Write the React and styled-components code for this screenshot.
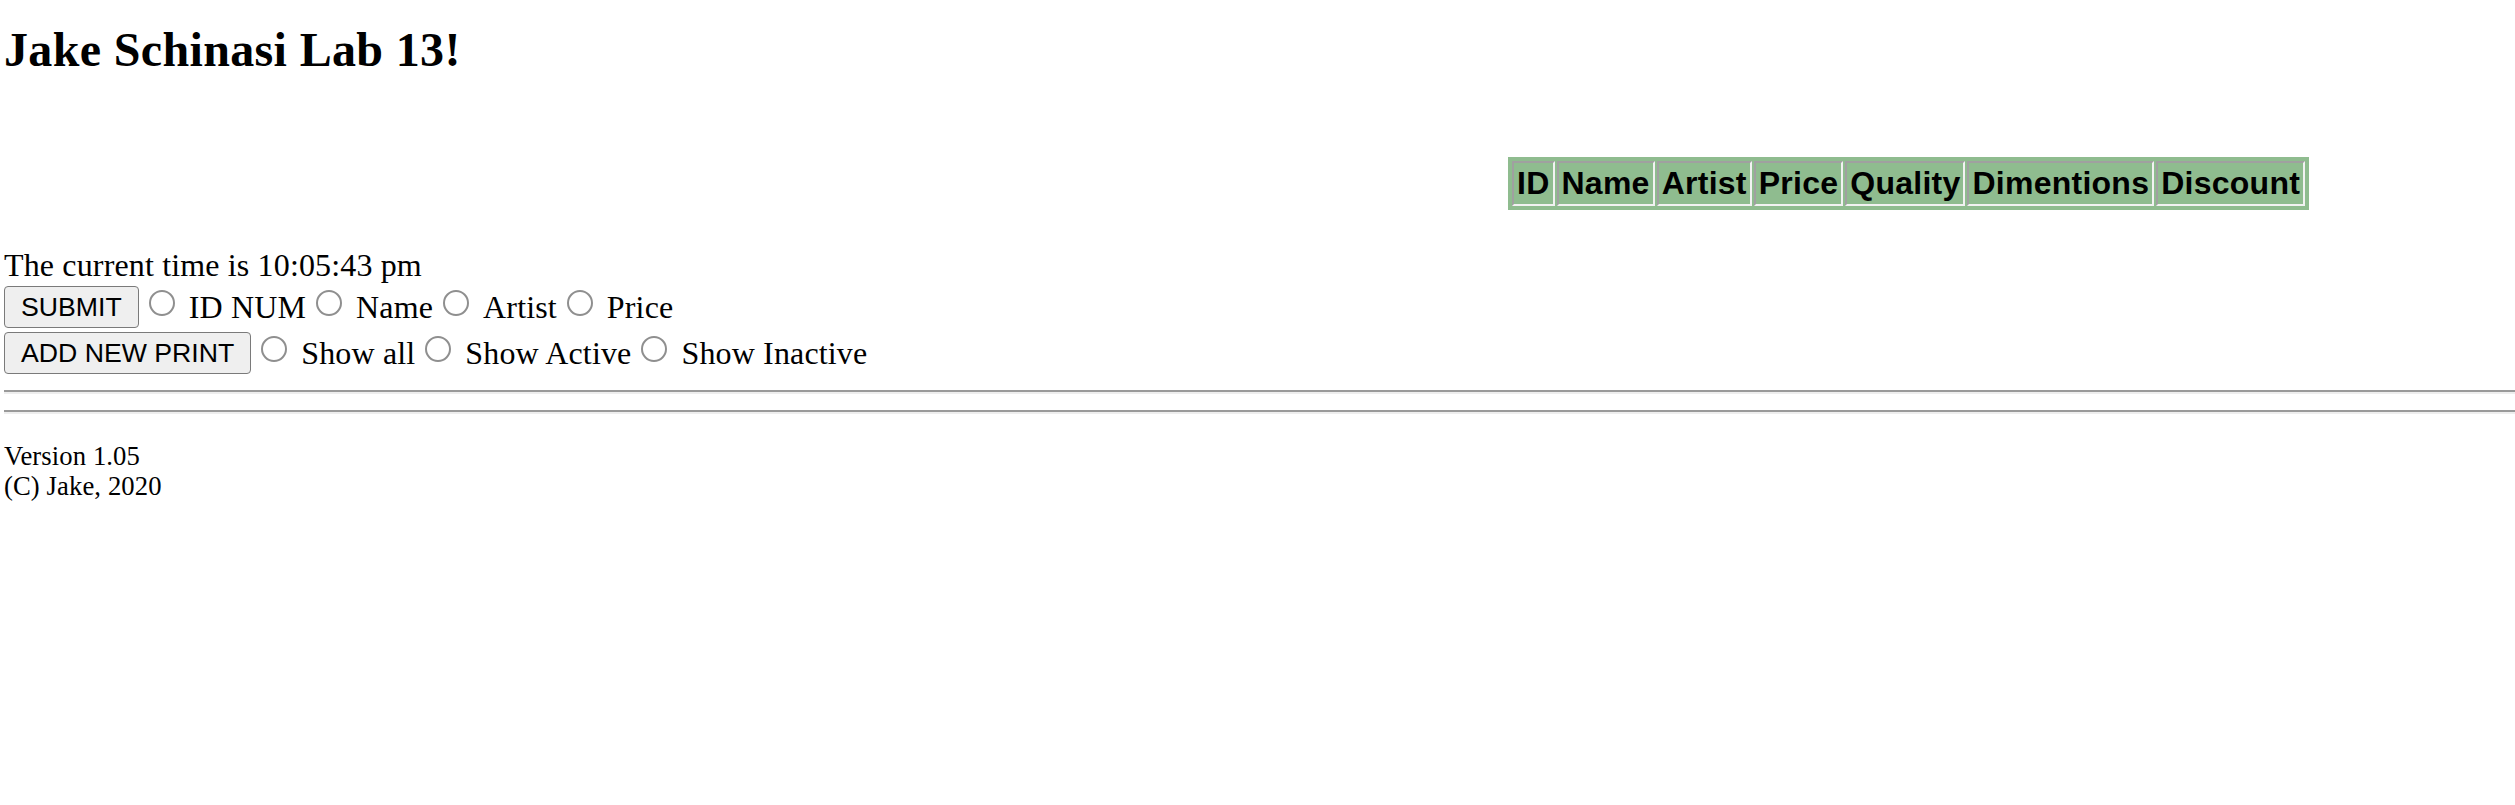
import React from "react";
import styled, { createGlobalStyle } from "styled-components";

const GlobalStyle = createGlobalStyle`
  html, body {
    margin: 0;
    padding: 0;
    background: #ffffff;
  }
  body {
    padding-left: 4px;
    font-family: "Liberation Serif", "Times New Roman", serif;
    font-size: 32px;
    color: #000000;
  }
`;

const Page = styled.div`
  display: flex;
  flex-direction: column;
  align-items: stretch;
  padding-top: 22px;
`;

const Title = styled.h1`
  margin: 0;
  font-family: "Liberation Serif", "Times New Roman", serif;
  font-size: 48px;
  font-weight: bold;
  line-height: 56px;
  letter-spacing: 0.35px;
`;

const TableWrap = styled.div`
  margin-top: 79px;
  padding-left: 1504px;
`;

const PrintTable = styled.table`
  background: #8fbc8f;
  border: 2px solid #8fbc8f;
  border-spacing: 2px;
  border-collapse: separate;
`;

const HeadCell = styled.th`
  font-family: "Liberation Sans", Arial, sans-serif;
  font-size: 32px;
  font-weight: bold;
  line-height: 37px;
  letter-spacing: 0.25px;
  padding: 2px 3px;
  border-style: solid;
  border-width: 2px;
  border-color: #a0a0a0 #f2f2f2 #f2f2f2 #a0a0a0;
  color: #000000;
  white-space: nowrap;
`;

const Clock = styled.div`
  margin-top: 37px;
  line-height: 37px;
  letter-spacing: 0.15px;
`;

const ControlRow = styled.div`
  display: flex;
  align-items: center;
  height: 42px;
  margin-top: ${(p) => p.$gap}px;
`;

const ActionButton = styled.button`
  box-sizing: border-box;
  height: 42px;
  margin: 0;
  padding: 0 16px;
  font-family: "Liberation Sans", Arial, sans-serif;
  font-size: 26.67px;
  line-height: 30px;
  color: #000000;
  background: #efefef;
  border: 1px solid #7a7a7a;
  border-radius: 4px;
  white-space: nowrap;
  cursor: default;
`;

const Radio = styled.input.attrs({ type: "radio" })`
  appearance: none;
  -webkit-appearance: none;
  box-sizing: border-box;
  flex: none;
  width: 26px;
  height: 26px;
  margin: 0 6px 8px 10px;
  border: 2px solid #8f8f8f;
  border-radius: 50%;
  background: #ffffff;
`;

const OptionLabel = styled.span`
  padding-left: 8px;
  line-height: 37px;
  letter-spacing: 0.15px;
  white-space: nowrap;
`;

const Rule = styled.div`
  height: 0;
  border-top: 2px solid #9a9a9a;
  border-bottom: 2px solid #eeeeee;
  margin-top: ${(p) => p.$gap}px;
`;

const Footer = styled.p`
  margin: 26.67px 0;
  font-size: 26.67px;
  line-height: 30.6px;
  letter-spacing: 0.1px;
`;

const columns = ["ID", "Name", "Artist", "Price", "Quality", "Dimentions", "Discount"];

function OptionGroup({ name, options }) {
  return options.map((o) => (
    <React.Fragment key={o}>
      <Radio name={name} />
      <OptionLabel>{o}</OptionLabel>
    </React.Fragment>
  ));
}

export default function App() {
  return (
    <>
      <GlobalStyle />
      <Page>
        <Title>Jake Schinasi Lab 13!</Title>
        <TableWrap>
          <PrintTable>
            <thead>
              <tr>
                {columns.map((c) => (
                  <HeadCell key={c}>{c}</HeadCell>
                ))}
              </tr>
            </thead>
          </PrintTable>
        </TableWrap>
        <Clock>The current time is 10:05:43 pm</Clock>
        <ControlRow $gap={2}>
          <ActionButton>SUBMIT</ActionButton>
          <OptionGroup name="search" options={["ID NUM", "Name", "Artist", "Price"]} />
        </ControlRow>
        <ControlRow $gap={4}>
          <ActionButton>ADD NEW PRINT</ActionButton>
          <OptionGroup name="filter" options={["Show all", "Show Active", "Show Inactive"]} />
        </ControlRow>
        <Rule $gap={16} />
        <Rule $gap={16} />
        <Footer>
          Version 1.05
          <br />
          (C) Jake, 2020
        </Footer>
      </Page>
    </>
  );
}
